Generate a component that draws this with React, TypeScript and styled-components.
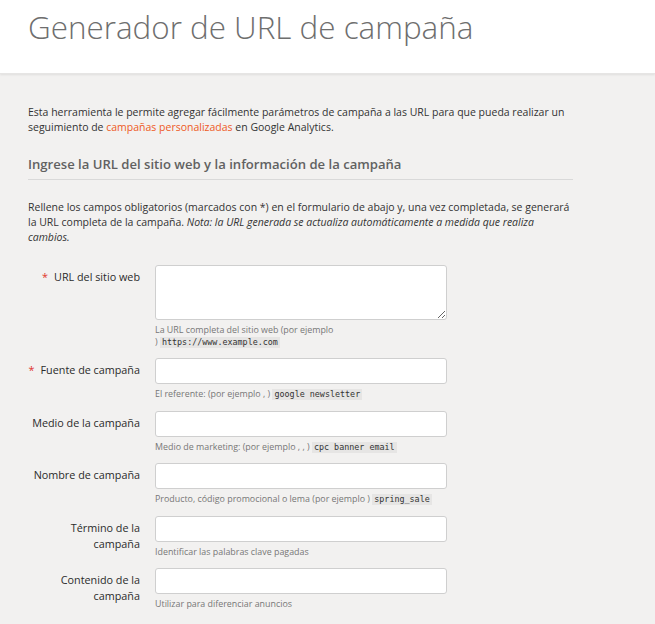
import React from "react";
import styled, { createGlobalStyle } from "styled-components";

const GlobalStyle = createGlobalStyle`
  html, body {
    margin: 0;
    padding: 0;
    background: #f2f1f0;
    font-family: "Open Sans", "Liberation Sans", sans-serif;
    color: #333;
  }
`;

const Header = styled.header`
  background: #fff;
  height: 74px;
  padding: 0 28px;
  box-shadow: 0 1px 2px rgba(0, 0, 0, 0.08);
  border-bottom: 1px solid #e6e5e4;
  box-sizing: border-box;
`;

const Title = styled.h1`
  margin: 0;
  padding-top: 5px;
  font-size: 31.4px;
  font-weight: 300;
  color: #6e6e6e;
  line-height: 44px;
`;

const Main = styled.main`
  padding: 31px 28px 0;
  width: 545px;
`;

const Intro = styled.p`
  margin: 0;
  font-size: 10.5px;
  line-height: 15px;
  color: #333;
`;

const Link = styled.a`
  color: #ee5a24;
  text-decoration: none;
`;

const SectionTitle = styled.h2`
  margin: 19px 0 0;
  padding-bottom: 5px;
  font-size: 13.1px;
  font-weight: 600;
  color: #616161;
  border-bottom: 1px solid #d9d9d9;
  line-height: 20px;
`;

const Note = styled.p`
  margin: 20px 0 0;
  font-size: 10.5px;
  line-height: 15px;
  color: #333;
`;

const Form = styled.div`
  margin-top: 20px;
  display: flex;
  flex-direction: column;
  gap: 10.5px;
`;

const Row = styled.div`
  display: grid;
  grid-template-columns: 112px 292px;
  column-gap: 15px;
`;

const Label = styled.label`
  text-align: right;
  font-size: 10.8px;
  line-height: 16px;
  color: #2b2b2b;
  padding-top: 4px;
`;

const Star = styled.span`
  color: #e0342b;
  margin-right: 6px;
`;

const Field = styled.div`
  display: flex;
  flex-direction: column;
`;

const Input = styled.input`
  box-sizing: border-box;
  height: 26px;
  width: 100%;
  border: 1px solid #cfcfcf;
  border-radius: 3px;
  background: #fff;
  margin: 0;
`;

const TextArea = styled.textarea`
  box-sizing: border-box;
  height: 55px;
  width: 100%;
  border: 1px solid #cfcfcf;
  border-radius: 3px;
  background: #fff;
  margin: 0;
  display: block;
`;

const Help = styled.div`
  margin-top: 4px;
  font-size: 8.9px;
  line-height: 11.5px;
  color: #777;
`;

const Nowrap = styled.span`
  white-space: nowrap;
`;

const Code = styled.code`
  display: inline-block;
  font-family: "DejaVu Sans Mono", "Liberation Mono", monospace;
  font-size: 8.4px;
  line-height: 11px;
  background: #e6e5e4;
  color: #333;
  padding: 0 2px;
  white-space: pre;
`;

type FieldDef = {
  label: string;
  required?: boolean;
  multi?: boolean;
  help: React.ReactNode;
};

const fields: FieldDef[] = [
  {
    label: "URL del sitio web",
    required: true,
    multi: true,
    help: (
      <>
        La URL completa del sitio web (por ejemplo{" "}
        <Nowrap>
          ) <Code>https://www.example.com</Code>
        </Nowrap>
      </>
    ),
  },
  {
    label: "Fuente de campaña",
    required: true,
    help: (
      <>
        El referente: (por ejemplo , ) <Code>google newsletter</Code>
      </>
    ),
  },
  {
    label: "Medio de la campaña",
    help: (
      <>
        Medio de marketing: (por ejemplo , , ) <Code>cpc banner email</Code>
      </>
    ),
  },
  {
    label: "Nombre de campaña",
    help: (
      <>
        Producto, código promocional o lema (por ejemplo ) <Code>spring_sale</Code>
      </>
    ),
  },
  { label: "Término de la campaña", help: "Identificar las palabras clave pagadas" },
  { label: "Contenido de la campaña", help: "Utilizar para diferenciar anuncios" },
];

const App = (): JSX.Element => {
  return (
    <>
      <GlobalStyle />
      <Header>
        <Title>Generador de URL de campaña</Title>
      </Header>
      <Main>
        <Intro>
          Esta herramienta le permite agregar fácilmente parámetros de campaña a las URL para que pueda realizar un
          seguimiento de <Link href="#">campañas personalizadas</Link> en Google Analytics.
        </Intro>
        <SectionTitle>Ingrese la URL del sitio web y la información de la campaña</SectionTitle>
        <Note>
          Rellene los campos obligatorios (marcados con *) en el formulario de abajo y, una vez completada, se generará
          la URL completa de la campaña.{" "}
          <em>Nota: la URL generada se actualiza automáticamente a medida que realiza cambios.</em>
        </Note>
        <Form>
          {fields.map((f) => (
            <Row key={f.label}>
              <Label>
                {f.required && <Star>*</Star>}
                {f.label}
              </Label>
              <Field>
                {f.multi ? <TextArea /> : <Input />}
                <Help>{f.help}</Help>
              </Field>
            </Row>
          ))}
        </Form>
      </Main>
    </>
  );
};

export default App;
